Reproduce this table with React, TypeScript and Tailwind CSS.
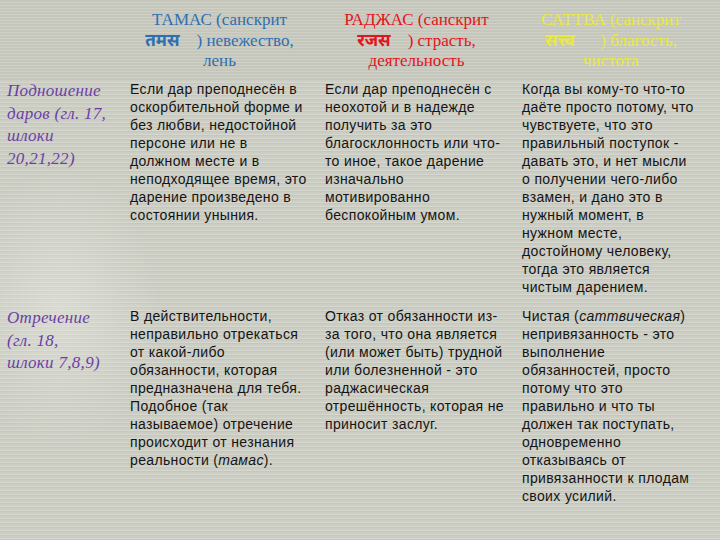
import React from "react";

const bodyCls = "text-[14px] leading-[18px] tracking-[0.35px] text-[#141414] whitespace-nowrap";
const labelCls = "text-[17px] leading-[22.5px] italic tracking-[0.3px] text-[#6b3fa6] pl-[7px]";
const serif = { fontFamily: '"Liberation Serif", "Times New Roman", serif' };
const deva = { fontFamily: '"Noto Sans", sans-serif' };

function Lines({ lines }: { lines: React.ReactNode[] }) {
  return (
    <div className={bodyCls}>
      {lines.map((l, i) => (
        <div key={i}>{l}</div>
      ))}
    </div>
  );
}

export default function App() {
  return (
    <div
      className="relative w-[720px] h-[540px] overflow-hidden bg-[repeating-linear-gradient(180deg,#cccdc3_0px,#cccdc3_2px,#d6d7ce_2px,#d6d7ce_3px,#c5c6bc_3px,#c5c6bc_4px)]"
      style={{ fontFamily: '"Liberation Sans", Arial, sans-serif' }}
    >
      <div className="absolute left-[-40px] top-[170px] w-[200px] h-[280px] rounded-full bg-[radial-gradient(closest-side,rgba(232,233,224,0.5),rgba(232,233,224,0))]" />
      <div className="relative flex flex-col">
        <div
          className="grid grid-cols-[130px_195px_197px_198px] pt-[10px] pb-[9px] bg-[repeating-linear-gradient(180deg,#c5c6bc_0px,#c5c6bc_2px,#cfd0c6_2px,#cfd0c6_3px)]"
          style={serif}
        >
          <div />
          <div className="text-center text-[17px] leading-[20px] text-[#2f6fb0] pr-[16px]">
            <div>ТАМАС (санскрит</div>
            <div><span className="font-bold text-[17px]" style={deva}>तमस</span>&nbsp;&nbsp;&nbsp;&nbsp;) невежество,</div>
            <div>лень</div>
          </div>
          <div className="text-center text-[17px] leading-[20px] text-[#e3141c] pr-[14px]">
            <div>РАДЖАС (санскрит</div>
            <div><span className="font-bold text-[17px]" style={deva}>रजस</span>&nbsp;&nbsp;&nbsp;&nbsp;) страсть,</div>
            <div>деятельность</div>
          </div>
          <div className="text-center text-[17px] leading-[20px] text-[#e9e942] pr-[20px]">
            <div>САТТВА (санскрит</div>
            <div><span className="font-bold text-[17px]" style={deva}>सत्त्व</span>&nbsp;&nbsp;&nbsp;&nbsp;&nbsp;&nbsp;) благость,</div>
            <div>чистота</div>
          </div>
        </div>

        <div className="grid grid-cols-[130px_195px_197px_198px] pb-[11px]">
          <div className={labelCls} style={serif}>
            Подношение<br />даров (гл. 17,<br />шлоки<br />20,21,22)
          </div>
          <Lines
            lines={[
              "Если дар преподнесён в",
              "оскорбительной форме и",
              "без любви, недостойной",
              "персоне или не в",
              "должном месте и в",
              "неподходящее время, это",
              "дарение произведено в",
              "состоянии уныния.",
            ]}
          />
          <Lines
            lines={[
              "Если дар преподнесён с",
              "неохотой и в надежде",
              "получить за это",
              "благосклонность или что-",
              "то иное, такое дарение",
              "изначально",
              "мотивированно",
              "беспокойным умом.",
            ]}
          />
          <Lines
            lines={[
              "Когда вы кому-то что-то",
              "даёте просто потому, что",
              "чувствуете, что это",
              "правильный поступок -",
              "давать это, и нет мысли",
              "о получении чего-либо",
              "взамен, и дано это в",
              "нужный момент, в",
              "нужном месте,",
              "достойному человеку,",
              "тогда это является",
              "чистым дарением.",
            ]}
          />
        </div>

        <div className="grid grid-cols-[130px_195px_197px_198px]">
          <div className={labelCls} style={serif}>
            Отречение<br />(гл. 18,<br />шлоки 7,8,9)
          </div>
          <Lines
            lines={[
              "В действительности,",
              "неправильно отрекаться",
              "от какой-либо",
              "обязанности, которая",
              "предназначена для тебя.",
              "Подобное (так",
              "называемое) отречение",
              "происходит от незнания",
              <>реальности (<i>тамас</i>).</>,
            ]}
          />
          <Lines
            lines={[
              "Отказ от обязанности из-",
              "за того, что она является",
              "(или может быть) трудной",
              "или болезненной - это",
              "раджасическая",
              "отрешённость, которая не",
              "приносит заслуг.",
            ]}
          />
          <Lines
            lines={[
              <>Чистая (<i>саттвическая</i>)</>,
              "непривязанность - это",
              "выполнение",
              "обязанностей, просто",
              "потому что это",
              "правильно и что ты",
              "должен так поступать,",
              "одновременно",
              "отказываясь от",
              "привязанности к плодам",
              "своих усилий.",
            ]}
          />
        </div>
      </div>
    </div>
  );
}
